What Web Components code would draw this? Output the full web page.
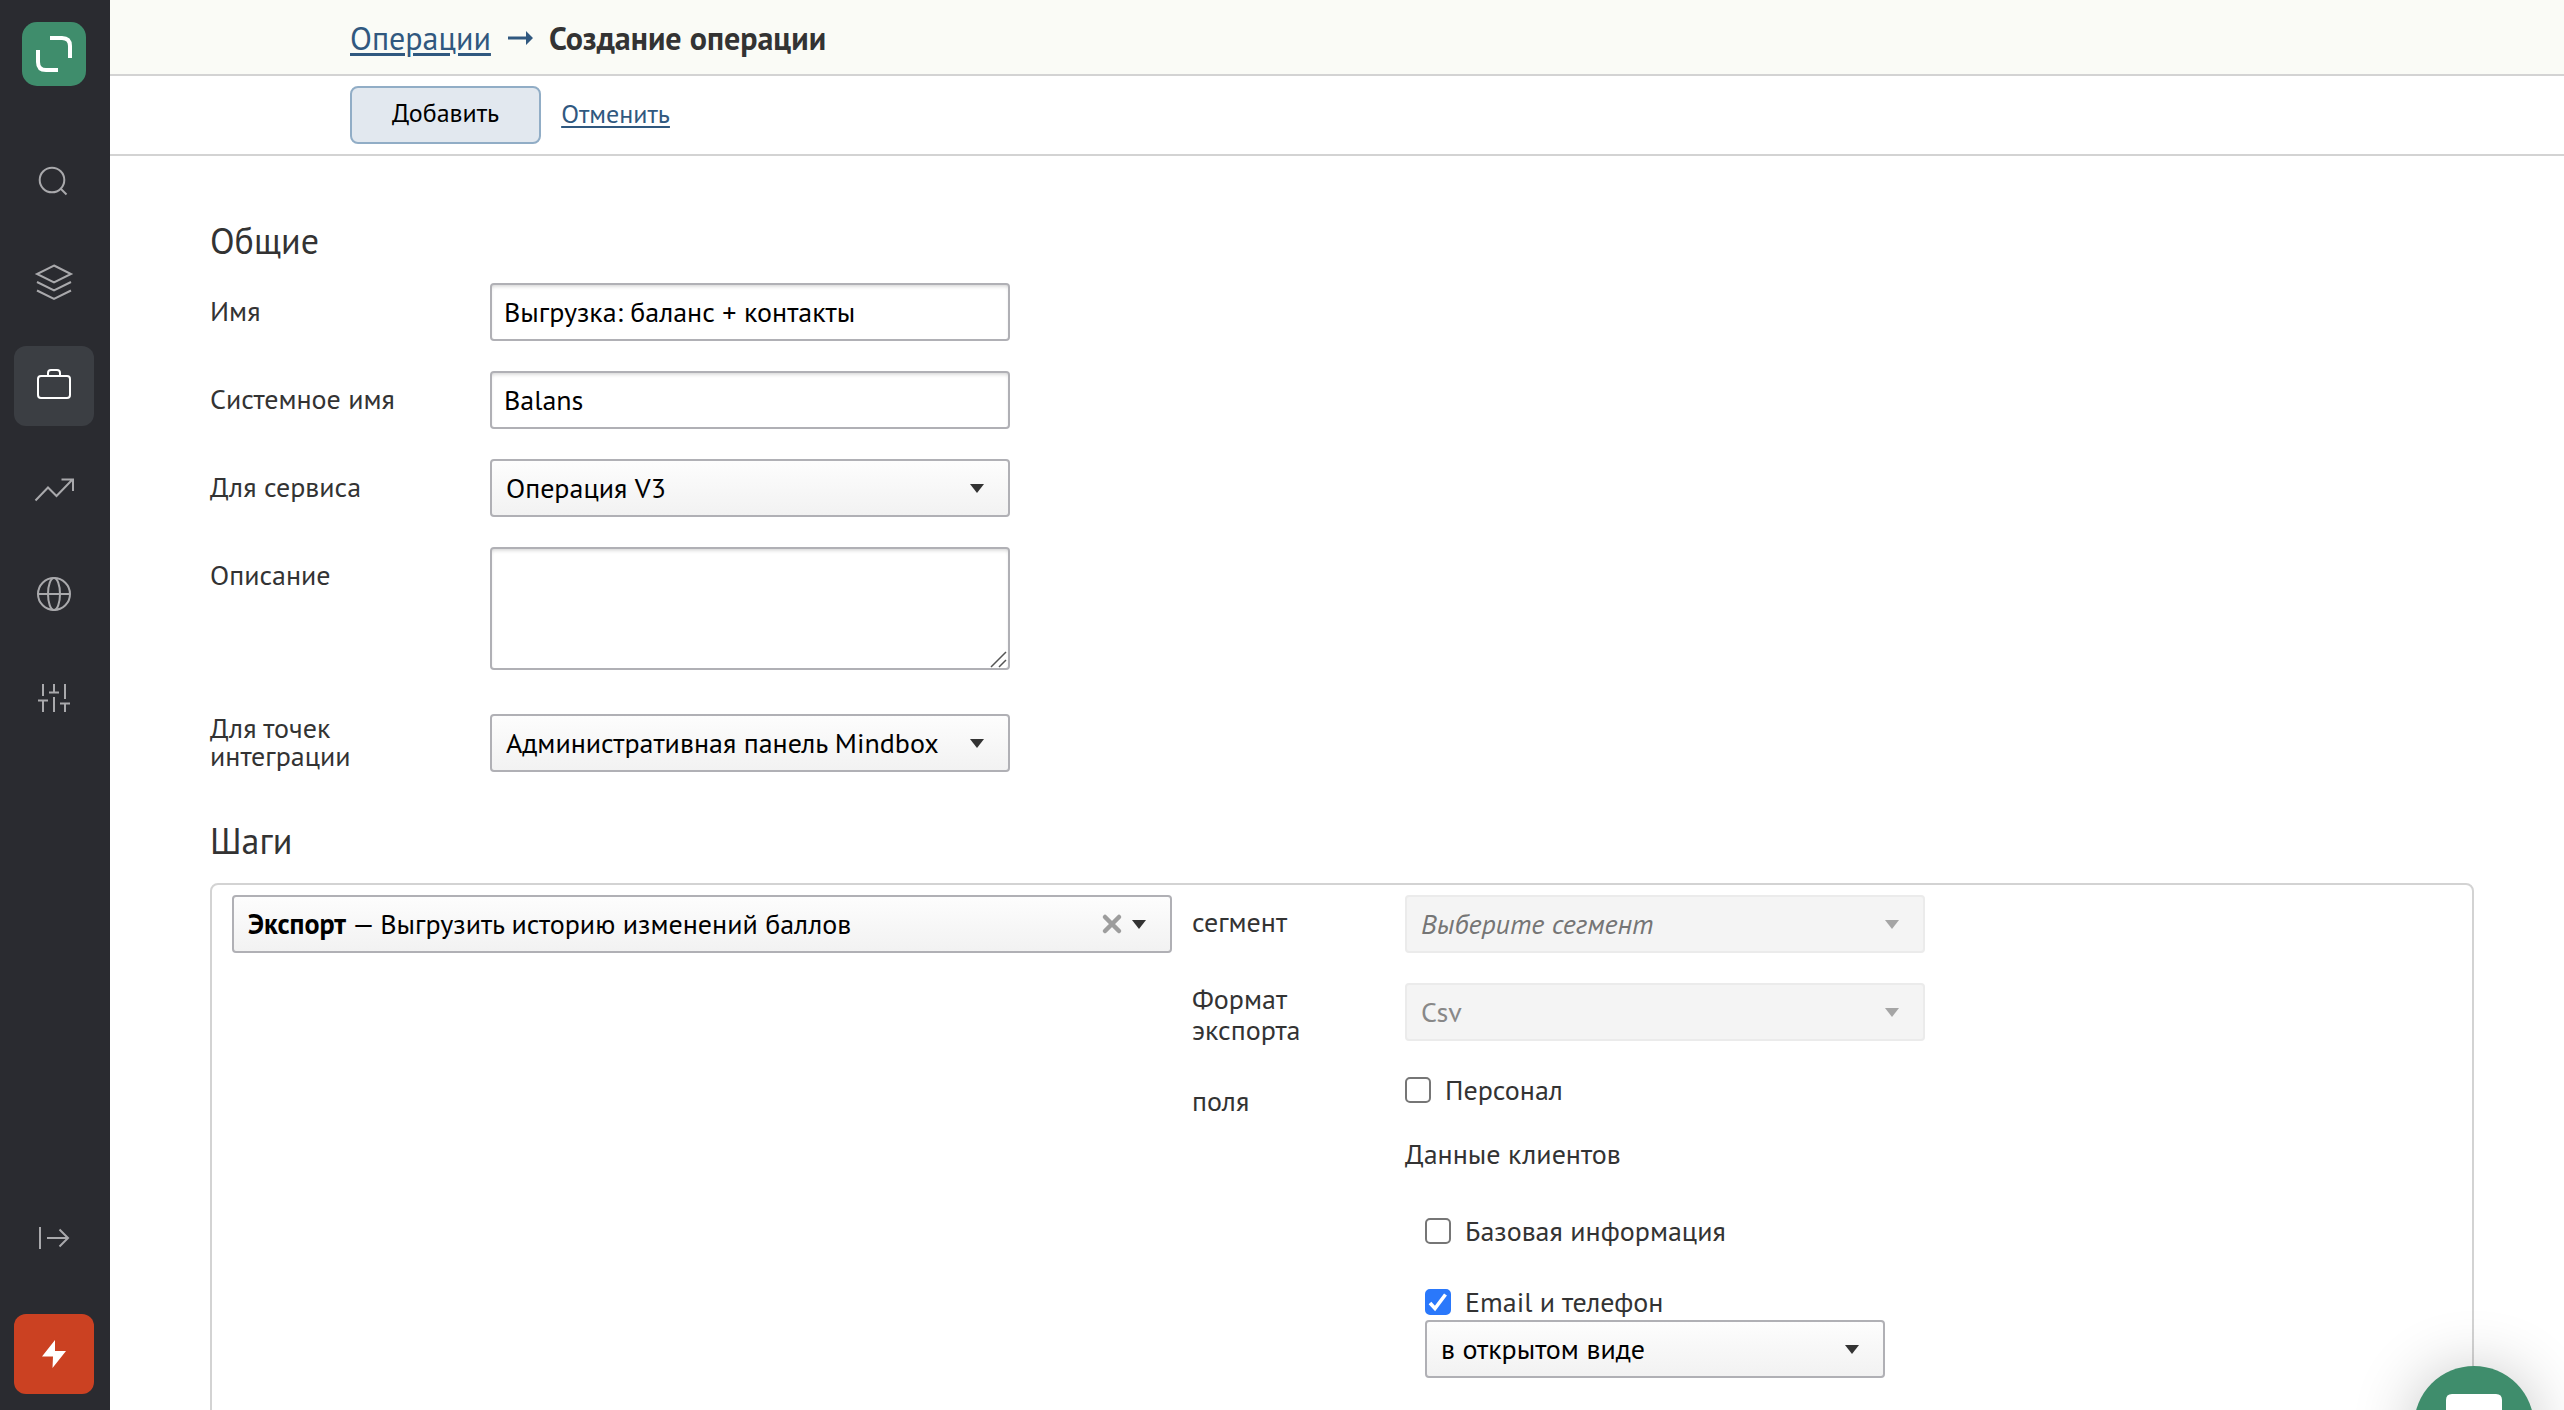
<!DOCTYPE html>
<html lang="ru">
<head>
<meta charset="utf-8">
<meta name="viewport" content="width=device-width, initial-scale=1">
<title>Создание операции</title>
<style>
  html, body { height: 100%; }
  body {
    margin: 0;
    overflow: hidden;
    background: #fff;
    color: #333;
    font: 28px/32px "PT Sans", "Open Sans", sans-serif;
    --line: #d3d3d3;
    --control-line: #b0b0b5;
    --link: #30587f;
  }
  .pair { display: grid; gap: 3px; }
</style>
</head>
<body>
<app-shell>
  <side-bar slot="nav">
    <nav-item label="Поиск"><svg width="48" height="48" viewBox="0 0 48 48"><circle cx="22" cy="26" r="12.300"/><path d="M30.500 34.500l6 6"/></svg></nav-item>
    <nav-item label="Кампании"><svg width="48" height="48" viewBox="0 0 48 48"><path d="M24 7.500L41 16L24 24.500L7 16zM7 24l17 8.500L41 24M7 32.500L24 41l17-8.500"/></svg></nav-item>
    <nav-item label="Процессы" active><svg width="48" height="48" viewBox="0 0 48 48"><rect x="8" y="14" width="32" height="22" rx="3"/><path d="M18 14v-3q0-3 3-3h6q3 0 3 3v3"/></svg></nav-item>
    <nav-item label="Аналитика"><svg width="48" height="48" viewBox="0 0 48 48"><path d="M5.500 34.500L18 21.500l8.500 8.500L42 14M31.500 13.500H43V25"/></svg></nav-item>
    <nav-item label="Интеграции"><svg width="48" height="48" viewBox="0 0 48 48"><circle cx="24" cy="24" r="16"/><ellipse cx="24" cy="24" rx="6" ry="16"/><path d="M8 24h32"/></svg></nav-item>
    <nav-item label="Настройки"><svg width="48" height="48" viewBox="0 0 48 48"><path d="M13 10v12M8 26.500h10M13 27v11M24 10v8M19 18.500h10M24 23v15M35 10v15M30 29.500h10M35 30v8"/></svg></nav-item>
    <nav-item slot="foot" label="Развернуть меню"><svg width="48" height="48" viewBox="0 0 48 48"><path d="M10 13v22M17 24h21M29.500 15.500l8.500 8.500l-8.500 8.500"/></svg></nav-item>
    <nav-item slot="foot" label="Быстрые действия" accent><svg width="48" height="48" viewBox="0 0 48 48"><path d="M25 10L12 26.500h11L22.500 38L36 21H25z"/></svg></nav-item>
  </side-bar>
  <crumb-bar slot="top" parent="Операции" current="Создание операции"></crumb-bar>
  <action-bar slot="top" submit="Добавить" cancel="Отменить"></action-bar>
  <form-section heading="Общие">
    <text-field label="Имя" value="Выгрузка: баланс + контакты"></text-field>
    <text-field label="Системное имя" value="Balans"></text-field>
    <select-field label="Для сервиса" value="Операция V3"></select-field>
    <text-field label="Описание" multiline></text-field>
    <select-field label="Для точек интеграции" value="Административная панель Mindbox" tall></select-field>
  </form-section>
  <form-section heading="Шаги">
    <step-panel group="Экспорт" operation="— Выгрузить историю изменений баллов">
      <select-field class="narrow" label="сегмент" value="Выберите сегмент" placeholder disabled></select-field>
      <select-field class="narrow" label="Формат экспорта" value="Csv" disabled></select-field>
      <export-fields label="поля" heading="Данные клиентов">
        <check-box slot="before" label="Персонал"></check-box>
        <check-box label="Базовая информация"></check-box>
        <div class="pair">
          <check-box label="Email и телефон" checked></check-box>
          <select-box name="Email и телефон" value="в открытом виде"></select-box>
        </div>
      </export-fields>
    </step-panel>
  </form-section>
  <chat-button slot="float"></chat-button>
</app-shell>

<script>
const define = (name, render) => customElements.define(name, class extends HTMLElement {
  connectedCallback() {
    if (this.shadowRoot) return;
    const attr = key => this.getAttribute(key) || '';
    this.attachShadow({ mode: 'open' }).innerHTML = '<style>*{box-sizing:border-box}</style>' + render(this, attr);
  }
});

const controlCss = `
  input, textarea, select {
    display: block; width: 100%; margin: 0; color: #000; font: inherit;
    border: 2px solid var(--control-line); border-radius: 4px; background: #fff;
  }
  input, textarea { padding: 0 12px 2px; box-shadow: inset 0 3px 4px -2px rgba(0,0,0,.2); }
  input { height: 58px; }
  textarea { height: 123px; padding: 10px 12px; resize: vertical; }
  textarea::-webkit-resizer { background: none; }
  .area { display: grid; }
  .area > * { grid-area: 1 / 1; }
  .grip { place-self: end; margin: 0 3px 2px 0; pointer-events: none; z-index: 1; }
  select {
    appearance: none; height: 58px; padding: 0 48px 0 14px;
    background: linear-gradient(#fdfdfd, #f2f2f2);
  }
  .drop { display: grid; }
  .drop > * { grid-area: 1 / 1; }
  .drop::after {
    content: ""; grid-area: 1 / 1; place-self: center end; margin-right: 26px;
    border: 7px solid transparent; border-top: 9px solid #333; border-bottom: 0; pointer-events: none;
  }
  .drop.off select { color: #888; opacity: 1; background: #f4f4f4; border-color: #ebebeb; }
  .drop.off.hint select { color: #757575; font-style: italic; }
  .drop.off::after { border-top-color: #a5a5a5; }
`;

const rowCss = `
  :host { display: grid; grid-template-columns: 280px minmax(0, 520px); align-items: start; }
  :host(.narrow) { grid-template-columns: 213px minmax(0, 520px); }
  label { padding: 14px 72px 0 0; line-height: 28px; }
  :host([tall]) label { padding-top: 0; }
  :host(.narrow) label { padding: 11px 72px 0 0; line-height: 31px; }
  :host(.narrow:nth-of-type(2)) label { padding-top: 0; }
`;

define('app-shell', () => `
  <style>
    :host { display: flex; height: 100vh; }
    .page { flex: 1; min-width: 0; display: flex; flex-direction: column; }
    main { flex: 1; min-height: 0; overflow: auto; scrollbar-width: none; padding: 64px 90px 64px 100px; }
  </style>
  <slot name="nav"></slot>
  <div class="page"><slot name="top"></slot><main><slot></slot></main></div>
  <slot name="float"></slot>`);

define('side-bar', () => `
  <style>
    :host { display: block; flex: none; width: 110px; background: #2a2b30; }
    nav { height: 100%; display: flex; flex-direction: column; padding: 22px 16px 16px 14px; }
    .logo { display: block; width: 64px; height: 64px; margin: 0 8px 52px; }
    .logo svg { display: block; }
    .items, .foot { display: flex; flex-direction: column; gap: 24px; }
    .foot { margin-top: auto; gap: 36px; }
  </style>
  <nav aria-label="Основное меню">
    <a class="logo" href="#" aria-label="Главная"><svg width="64" height="64" viewBox="0 0 64 64">
      <rect width="64" height="64" rx="15" fill="#3f8d6c"/>
      <path d="M28 16h12q8 0 8 8v12M16 28v12q0 8 8 8h12" fill="none" stroke="#fff" stroke-width="4"/></svg></a>
    <div class="items"><slot></slot></div>
    <div class="foot"><slot name="foot"></slot></div>
  </nav>`);

define('nav-item', (el, attr) => `
  <style>
    :host { display: block; }
    a { display: grid; place-items: center; height: 80px; border-radius: 12px; }
    ::slotted(svg) { display: block; fill: none; stroke: #a9a9ac; stroke-width: 2; }
    :host([active]) a { background: #3b3e43; }
    :host([active]) ::slotted(svg) { stroke: #fff; }
    :host([accent]) a { background: #cb4122; }
    :host([accent]) ::slotted(svg) { fill: #fff; stroke: none; }
  </style>
  <a href="#" aria-label="${attr('label')}"><slot></slot></a>`);

define('crumb-bar', (el, attr) => `
  <style>
    :host { display: flex; align-items: center; flex: none; gap: 16px; height: 76px; padding: 2px 0 0 240px;
      background: #fafbf6; border-bottom: 2px solid var(--line); box-sizing: border-box; font-size: 32px; line-height: 42px; }
    a { color: var(--link); text-decoration-thickness: 3px; text-underline-offset: 3px; }
    h1 { margin: 0; font: inherit; font-weight: 700; }
  </style>
  <a href="#">${attr('parent')}</a>
  <svg width="26" height="16" viewBox="0 0 26 16" fill="#30587f" aria-hidden="true"><path d="M1 6.500h18V1l7 7l-7 7V9.500H1z"/></svg>
  <h1>${attr('current')}</h1>`);

define('action-bar', (el, attr) => `
  <style>
    :host { display: flex; align-items: center; flex: none; gap: 20px; height: 80px; padding-left: 240px;
      border-bottom: 2px solid var(--line); box-sizing: border-box; font-size: 26px; }
    button { height: 58px; padding: 0 40px 4px; font: inherit; color: #000; background: #e2e8ef;
      border: 2px solid #91adc6; border-radius: 8px; }
    a { padding-bottom: 2px; color: var(--link); text-decoration-thickness: 2px; text-underline-offset: 3px; }
  </style>
  <button type="button">${attr('submit')}</button>
  <a href="#">${attr('cancel')}</a>`);

define('form-section', (el, attr) => `
  <style>
    :host { display: block; margin-bottom: 48px; }
    h2 { margin: 0 0 22px; font-size: 36px; line-height: 41px; font-weight: 400; }
    .rows { display: flex; flex-direction: column; gap: 30px; }
    ::slotted([tall]) { margin-top: 14px; }
  </style>
  <h2>${attr('heading')}</h2>
  <div class="rows"><slot></slot></div>`);

define('text-field', (el, attr) => `
  <style>${rowCss}${controlCss}</style>
  <label for="c">${attr('label')}</label>
  ${el.hasAttribute('multiline')
    ? '<div class="area"><textarea id="c"></textarea><svg class="grip" width="17" height="17" viewBox="0 0 17 17" aria-hidden="true"><path d="M1 16L16 1M9 16l7-7" stroke="#555" stroke-width="1.500"/></svg></div>'
    : `<input id="c" type="text" value="${attr('value')}">`}`);

const dropClass = el => 'drop' + (el.hasAttribute('disabled') ? ' off' : '') + (el.hasAttribute('placeholder') ? ' hint' : '');

define('select-field', (el, attr) => `
  <style>${rowCss}${controlCss}</style>
  <label for="c">${attr('label')}</label>
  <div class="${dropClass(el)}"><select id="c" ${el.hasAttribute('disabled') ? 'disabled' : ''}><option>${attr('value')}</option></select></div>`);

define('select-box', (el, attr) => `
  <style>:host { display: block; }${controlCss}</style>
  <div class="${dropClass(el)}"><select aria-label="${attr('name')}"><option>${attr('value')}</option></select></div>`);

define('check-box', (el, attr) => `
  <style>
    :host { display: block; }
    label { display: flex; align-items: center; gap: 14px; line-height: 30px; }
    input { appearance: none; flex: none; width: 26px; height: 26px; margin: 0; display: grid;
      border: 2px solid #767676; border-radius: 5px; background: #fff; }
    input:checked { border-color: #2a78fb; background: #2a78fb; }
    .box { display: grid; }
    .box > * { grid-area: 1 / 1; }
    svg { display: none; pointer-events: none; z-index: 1; }
    input:checked + svg { display: block; }
  </style>
  <label><span class="box"><input type="checkbox" ${el.hasAttribute('checked') ? 'checked' : ''}>
    <svg width="26" height="26" viewBox="0 0 26 26"><path d="M5 14l5 5.500L20.500 5.500" fill="none" stroke="#fff" stroke-width="3.600"/></svg></span>${attr('label')}</label>`);

define('export-fields', (el, attr) => `
  <style>
    :host { display: grid; grid-template-columns: 213px minmax(0, 520px); align-items: start; }
    .name { padding-top: 10px; }
    .group { margin: 31px 0 0; padding: 0; border: 0; }
    legend { padding: 0; line-height: 36px; }
    .list { display: flex; flex-direction: column; gap: 41px; padding: 44px 40px 0 20px; }
  </style>
  <span class="name">${attr('label')}</span>
  <div><slot name="before"></slot>
    <fieldset class="group"><legend>${attr('heading')}</legend><div class="list"><slot></slot></div></fieldset>
  </div>`);

define('step-panel', (el, attr) => `
  <style>${controlCss}
    :host { display: flex; gap: 20px; min-height: 640px; padding: 10px 20px; border: 2px solid var(--line); border-radius: 8px; box-sizing: border-box; }
    .operation { flex: none; display: flex; align-items: center; width: 940px; height: 58px; padding-left: 14px;
      color: #000; border: 2px solid var(--control-line); border-radius: 4px; background: linear-gradient(#fdfdfd, #f2f2f2); }
    .operation label { font-weight: 700; }
    .operation .drop { flex: 1; grid-template-columns: 1fr 70px; }
    .operation .drop select { grid-column: 1 / -1; height: 54px; padding: 0 6px; border: 0; background: none; }
    .operation .drop::after { grid-column: 1 / -1; margin-right: 24px; }
    .clear { grid-column: 2; place-self: center start; width: 24px; height: 24px; margin: 0; padding: 0; border: 0; background: none; z-index: 1; }
    .clear svg { display: block; }
    .params { flex: 1; display: flex; flex-direction: column; gap: 30px; }
  </style>
  <div class="operation"><label for="op">${attr('group')}</label>
    <div class="drop"><select id="op"><option>${attr('operation')}</option></select>
      <button class="clear" type="button" aria-label="Очистить"><svg width="24" height="24" viewBox="0 0 24 24"><path d="M5 5l14 14M19 5L5 19" stroke="#9d9d9d" stroke-width="4.500" stroke-linecap="round"/></svg></button>
    </div>
  </div>
  <div class="params"><slot></slot></div>`);

define('chat-button', () => `
  <style>
    :host { position: fixed; right: 30px; bottom: -76px; }
    button { display: grid; justify-items: center; align-content: start; width: 120px; height: 120px; padding: 28px 0 0; border: 0;
      border-radius: 50%; background: #3f8d6c; box-shadow: 0 4px 64px rgba(0,0,0,.24); }
  </style>
  <button type="button" aria-label="Открыть чат"><svg width="56" height="60" viewBox="0 0 56 60"><path d="M6 0h44q6 0 6 6v50l-16-10H6q-6 0-6-6V6q0-6 6-6z" fill="#fff"/></svg></button>`);
</script>
</body>
</html>
